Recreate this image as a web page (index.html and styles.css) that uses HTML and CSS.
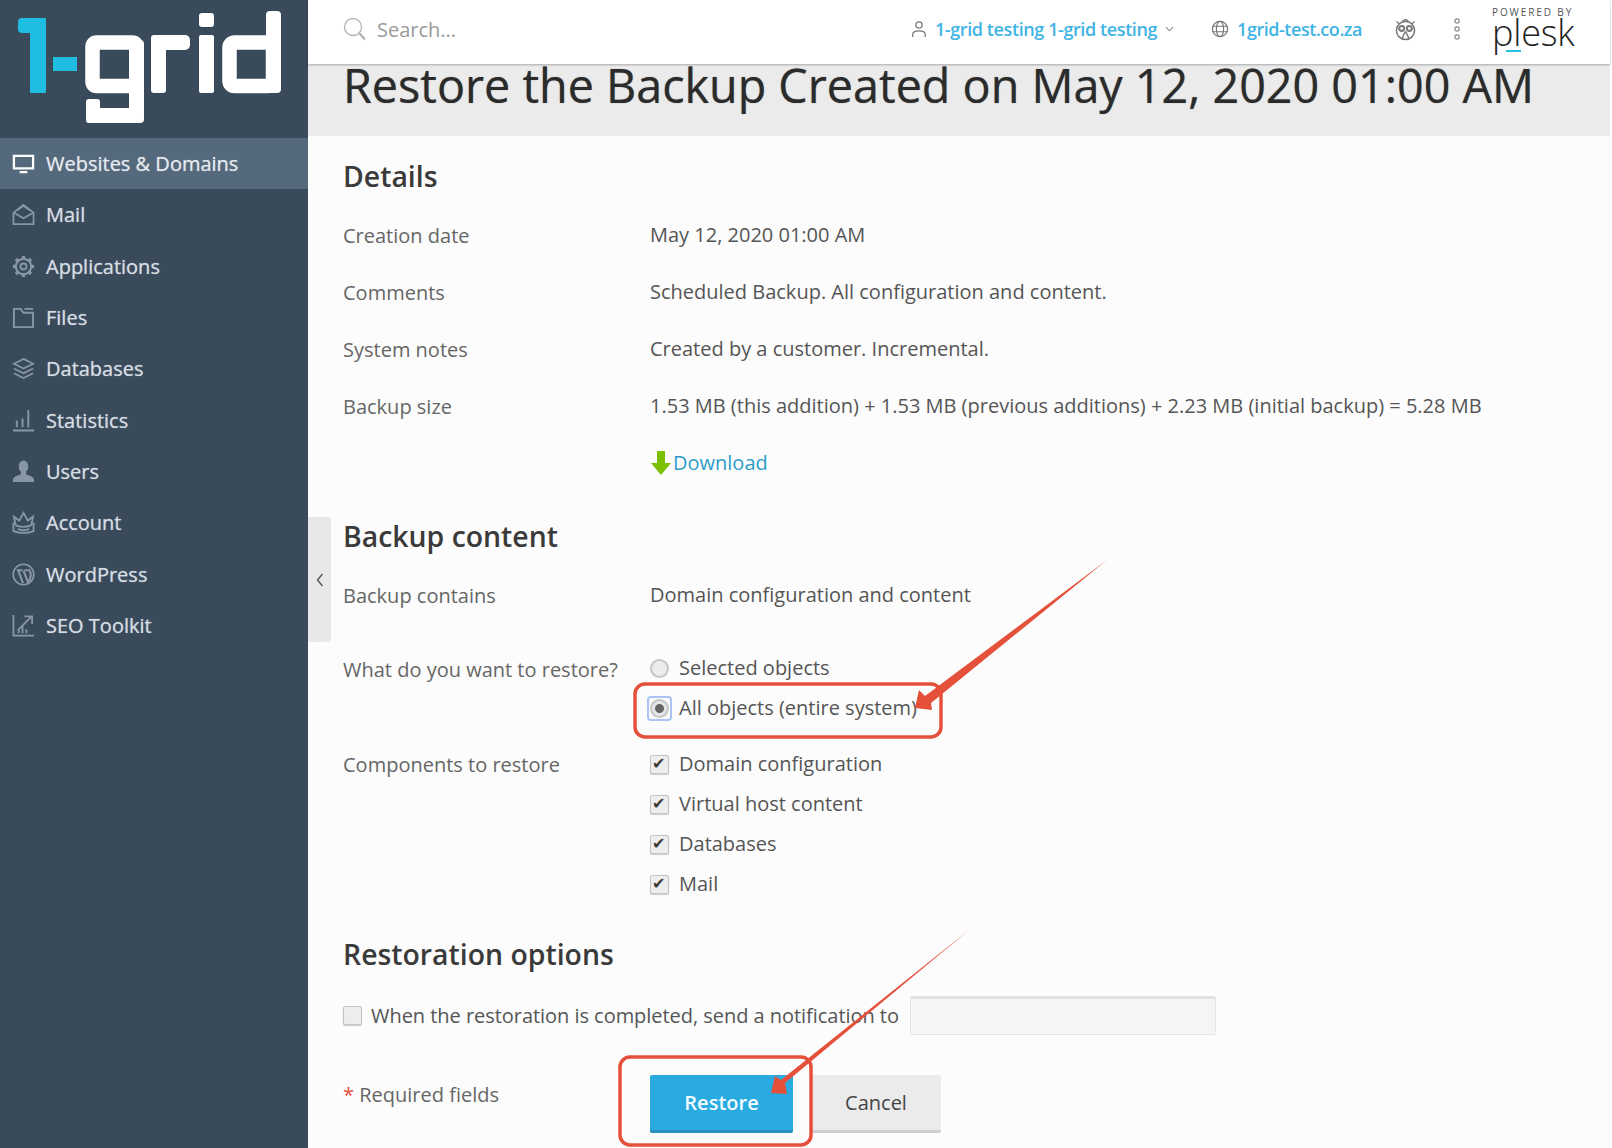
FILE: index.html
```html
<!DOCTYPE html>
<html lang="en">
<head>
<meta charset="utf-8">
<title>Restore the Backup</title>
<link rel="stylesheet" href="styles.css">
</head>
<body>
<div class="app">
  <aside class="sidebar">
    <div class="logo">
      <svg width="308" height="138" viewBox="0 0 308 138" role="img" aria-label="1-grid logo">
        <g fill="#1fbde0">
          <rect x="30" y="18" width="16" height="75" rx="1"/>
          <rect x="18" y="18" width="20" height="15" rx="4"/>
          <rect x="53" y="57" width="24" height="14"/>
        </g>
        <g fill="none" stroke="#fff" stroke-width="14.500">
          <rect x="92.500" y="42.500" width="44" height="43.500" rx="4"/>
          <rect x="229.500" y="42.500" width="43.500" height="43.500" rx="5"/>
        </g>
        <g fill="#fff">
          <rect x="129" y="40" width="15" height="83" rx="4"/>
          <rect x="86" y="99" width="14" height="24" rx="3"/>
          <rect x="86" y="108" width="58" height="15" rx="5"/>
          <rect x="151" y="35" width="15" height="58" rx="3"/>
          <rect x="151" y="35" width="39" height="15" rx="5"/>
          <rect x="199" y="35" width="15" height="58" rx="2"/>
          <rect x="199" y="13" width="15" height="14" rx="3"/>
          <rect x="266" y="11" width="15" height="82" rx="4"/>
        </g>
      </svg>
    </div>
    <nav class="menu">
      <a class="menu-item active"><svg class="ico" viewBox="0 0 24 24"><path d="M2 4h20v13H2zM8 21h8" fill="none" stroke="currentColor" stroke-width="2.400"/></svg><span>Websites &amp; Domains</span></a>
      <a class="menu-item"><svg class="ico" viewBox="0 0 24 24"><path d="M1.500 10 12 2l10.500 8v12h-21zM1.500 10 12 16l10.500-6M5 8l7-5 7 5" fill="none" stroke="currentColor" stroke-width="1.800"/></svg><span>Mail</span></a>
      <a class="menu-item"><svg class="ico" viewBox="0 0 24 24"><circle cx="12" cy="12" r="3.200" fill="none" stroke="currentColor" stroke-width="2"/><circle cx="12" cy="12" r="8" fill="none" stroke="currentColor" stroke-width="2.200"/><path d="M12 1v4M12 19v4M1 12h4M19 12h4M4.200 4.200 7 7M17 17l2.800 2.800M4.200 19.800 7 17M17 7l2.800-2.800" stroke="currentColor" stroke-width="3.500"/></svg><span>Applications</span></a>
      <a class="menu-item"><svg class="ico" viewBox="0 0 24 24"><path d="M2 3h7l3 4h10v15H2zM13 3h9" fill="none" stroke="currentColor" stroke-width="2"/></svg><span>Files</span></a>
      <a class="menu-item"><svg class="ico" viewBox="0 0 24 24"><path d="m12 2 10 5-10 5L2 7zM2 12l10 5 10-5M2 17l10 5 10-5" fill="none" stroke="currentColor" stroke-width="1.900"/></svg><span>Databases</span></a>
      <a class="menu-item"><svg class="ico" viewBox="0 0 24 24"><path d="M1 22.500h22M5 19v-7M11 19v-9M17 19V1" fill="none" stroke="currentColor" stroke-width="2"/></svg><span>Statistics</span></a>
      <a class="menu-item"><svg class="ico" viewBox="0 0 24 24"><ellipse cx="12" cy="7" rx="5" ry="6.500" fill="currentColor"/><path d="M9.500 12h5l.5 3.500c4 1 8 2 8 5.500v2H1v-2c0-3.500 4-4.500 8-5.500z" fill="currentColor"/></svg><span>Users</span></a>
      <a class="menu-item"><svg class="ico" viewBox="0 0 24 24"><path d="M4 15 2 6l5.500 4L12 2l4.500 8L22 6l-2 9M1.500 12v9c6 2.500 15 2.500 21 0v-9M4 15c5 2 11 2 16 0M6 19c4 1.500 8 1.500 12 0" fill="none" stroke="currentColor" stroke-width="1.900"/></svg><span>Account</span></a>
      <a class="menu-item"><svg class="ico" viewBox="0 0 24 24"><circle cx="12" cy="12" r="10.700" fill="none" stroke="currentColor" stroke-width="1.800"/><path d="M5 7.500h6M13 7.500h6M6.500 8l5 13M12 8l5 13M17 21l2.500-7c.5-2 0-3.500-1-6" fill="none" stroke="currentColor" stroke-width="2.200"/></svg><span>WordPress</span></a>
      <a class="menu-item"><svg class="ico" viewBox="0 0 24 24"><path d="M1.500 1v21.500H23M6 17 20 3M13 2.500h8v8M7 20v-3M11 20v-7M15 20v-4" fill="none" stroke="currentColor" stroke-width="1.900"/></svg><span>SEO Toolkit</span></a>
    </nav>
  </aside>

  <main class="main">
    <header class="topbar">
      <div class="search">
        <svg class="search-icon" viewBox="0 0 24 24"><circle cx="10" cy="10" r="8.500" fill="none" stroke="#b4b4b4" stroke-width="1.300"/><path d="m16.500 16.500 5.500 6" fill="none" stroke="#b4b4b4" stroke-width="2.400"/></svg>
        <span>Search...</span>
      </div>
      <div class="top-actions">
        <svg class="top-ico user-ico" viewBox="0 0 20 20"><circle cx="10" cy="5.500" r="3.500" fill="none" stroke="#777" stroke-width="1.400"/><path d="M3 19v-3c0-3 3-4 7-4s7 1 7 4v3" fill="none" stroke="#777" stroke-width="1.400"/></svg>
        <a class="top-link user-link">1-grid testing 1-grid testing</a>
        <svg class="chev" viewBox="0 0 10 6"><path d="m1 1 4 4 4-4" fill="none" stroke="#888" stroke-width="1.200"/></svg>
        <svg class="top-ico globe-ico" viewBox="0 0 20 20"><circle cx="10" cy="10" r="8.500" fill="none" stroke="#777" stroke-width="1.400"/><ellipse cx="10" cy="10" rx="4" ry="8.500" fill="none" stroke="#777" stroke-width="1.300"/><path d="M2 7h16M2 13h16" stroke="#777" stroke-width="1.200"/></svg>
        <a class="top-link domain-link">1grid-test.co.za</a>
        <svg class="owl" viewBox="0 0 22 24"><path d="M4 6 1.500 3.500M18 6l2.500-2.500M8 3l3-1.500L14 3" fill="none" stroke="#777" stroke-width="1.400"/><circle cx="11" cy="13" r="9.500" fill="none" stroke="#777" stroke-width="1.600"/><circle cx="7" cy="11" r="3.600" fill="#777"/><circle cx="15" cy="11" r="3.600" fill="#777"/><circle cx="7" cy="11" r="1.500" fill="#fff"/><circle cx="15" cy="11" r="1.500" fill="#fff"/><path d="m11 14-3.500 7M11 14l3.500 7" fill="none" stroke="#777" stroke-width="1.400"/></svg>
        <svg class="dots" viewBox="0 0 6 22"><circle cx="3" cy="3" r="2.100" fill="none" stroke="#888" stroke-width="1.200"/><circle cx="3" cy="11" r="2.100" fill="none" stroke="#888" stroke-width="1.200"/><circle cx="3" cy="19" r="2.100" fill="none" stroke="#888" stroke-width="1.200"/></svg>
        <div class="plesk">
          <span class="plesk-small">POWERED BY</span>
          <span class="plesk-name">plesk</span>
          <i class="plesk-dash"></i>
        </div>
      </div>
    </header>

    <div class="title-band"><h1>Restore the Backup Created on May 12, 2020 01:00 AM</h1></div>

    <div class="content">
      <button class="collapse" aria-label="Collapse"><svg viewBox="0 0 8 14"><path d="M6.500 1 1.500 7l5 6" fill="none" stroke="#555" stroke-width="1.400"/></svg></button>

      <section class="details">
        <h2>Details</h2>
        <div class="row"><div class="label">Creation date</div><div class="value">May 12, 2020 01:00 AM</div></div>
        <div class="row"><div class="label">Comments</div><div class="value">Scheduled Backup. All configuration and content.</div></div>
        <div class="row"><div class="label">System notes</div><div class="value">Created by a customer. Incremental.</div></div>
        <div class="row"><div class="label">Backup size</div><div class="value">1.53 MB (this addition) + 1.53 MB (previous additions) + 2.23 MB (initial backup) = 5.28 MB</div></div>
        <div class="row"><div class="label"></div><div class="value download"><svg class="dl-ico" viewBox="0 0 20 24"><path d="M6 0h8v12h6L10 24 0 12h6z" fill="#7ac000"/></svg><a>Download</a></div></div>
      </section>

      <section class="backup">
        <h2>Backup content</h2>
        <div class="row row-contains"><div class="label">Backup contains</div><div class="value">Domain configuration and content</div></div>
        <div class="row row-what">
          <div class="label">What do you want to restore?</div>
          <div class="value options">
            <div class="opt"><i class="radio"></i>Selected objects</div>
            <div class="opt"><i class="radio checked"></i>All objects (entire system)</div>
          </div>
        </div>
        <div class="row row-comp">
          <div class="label">Components to restore</div>
          <div class="value options">
            <div class="opt"><i class="check on"></i>Domain configuration</div>
            <div class="opt"><i class="check on"></i>Virtual host content</div>
            <div class="opt"><i class="check on"></i>Databases</div>
            <div class="opt"><i class="check on"></i>Mail</div>
          </div>
        </div>
      </section>

      <section class="options-sec">
        <h2>Restoration options</h2>
        <div class="notify"><i class="check"></i><span>When the restoration is completed, send a notification to</span><input class="email" type="text" aria-label="Email"></div>
      </section>

      <div class="actions">
        <div class="required"><span class="star">*</span> Required fields</div>
        <button class="btn primary">Restore</button>
        <button class="btn cancel">Cancel</button>
      </div>
    </div>
  </main>
</div>

<svg class="annot" viewBox="0 0 1612 1148" aria-hidden="true">
  <rect class="annot-box" x="635" y="684" width="306" height="53" rx="10"/>
  <rect class="annot-box" x="620" y="1057" width="191" height="88" rx="10"/>
  <polygon class="annot-arrow" points="1107,560 931,703 932,710 915,708 919,690 925,696"/>
  <polygon class="annot-arrow" points="969,930 785,1083 787,1094 771,1093 775,1076 781,1080"/>
</svg>
</body>
</html>
```

FILE: styles.css
```css
* { box-sizing: border-box; }
html, body { margin: 0; padding: 0; height: 1148px; overflow: hidden; background: #fff; }
body { position: relative; font-family: "Open Sans", "Liberation Sans", sans-serif; color: #555; }
.app { display: flex; width: 1610px; height: 1148px; }

.sidebar { width: 308px; flex: none; background: #394a5a; }
.logo { height: 138px; }
.logo svg { display: block; }
.menu { display: flex; flex-direction: column; }
.menu-item { display: flex; align-items: center; height: 51.3px; padding-left: 12px; color: #d6dde3; font-size: 20px; text-shadow: 0 0 1px rgba(214,221,227,.7); }
.menu-item .ico { width: 23px; height: 23px; margin-right: 11px; color: #8797a5; flex: none; }
.menu-item.active { background: #54697c; color: #e6ebef; }
.menu-item.active .ico { color: #fff; }

.main { flex: 1; display: flex; flex-direction: column; background: #fcfcfc; min-width: 0; }
.topbar { height: 64px; flex: none; display: flex; align-items: center; background: #fff; box-shadow: 0 1px 2px rgba(0,0,0,.28); position: relative; z-index: 2; padding: 0 0 6px 35px; }
.search { display: flex; align-items: center; color: #999; font-size: 20px; }
.search-icon { width: 24px; height: 24px; margin-right: 10px; }
.top-actions { margin-left: auto; display: flex; align-items: center; }
.top-ico { width: 18px; height: 18px; flex: none; }
.user-ico { margin-right: 7px; }
.top-link { color: #3fb4e5; font-size: 18px; font-weight: 600; letter-spacing: -0.4px; }
.domain-link { letter-spacing: -0.46px; }
.chev { width: 9px; height: 6px; margin: 0 6px 0 8px; }
.globe-ico { margin: 0 8px 0 31px; }
.owl { width: 21px; height: 23px; margin: 0 38px 0 33px; }
.dots { width: 6px; height: 22px; margin-right: 32px; }
.plesk { position: relative; width: 84px; height: 58px; margin-right: 34px; color: #222; }
.plesk-small { position: absolute; left: 0; top: 6px; font-size: 10px; line-height: 12px; letter-spacing: 1.9px; color: #555; white-space: nowrap; }
.plesk-name { position: absolute; left: 0; top: 18px; font-size: 36px; font-weight: 300; line-height: 30px; letter-spacing: -0.2px; }
.plesk-dash { position: absolute; left: 14px; top: 50px; width: 15px; height: 2px; background: #28bde2; }

.title-band { height: 72px; flex: none; background: #ebebeb; padding-left: 35px; }
h1 { margin: 0; font-size: 46.7px; font-weight: 400; line-height: 42px; color: #2b2b2b; white-space: nowrap; text-shadow: 0 0 1px rgba(43,43,43,.6); }
.content { flex: 1; position: relative; padding: 20px 0 0 35px; }
h2 { margin: 0; font-size: 28.4px; font-weight: 600; line-height: 40px; color: #3a3a3a; }
.collapse { position: absolute; left: 0; top: 381px; width: 23px; height: 125px; padding: 0; border: 0; border-radius: 0 4px 4px 0; background: #e8e8e8; display: flex; align-items: center; justify-content: center; }
.collapse svg { width: 8px; height: 14px; }

.row { display: grid; grid-template-columns: 307px 1fr; font-size: 20px; height: 57px; line-height: 34px; }
.label { color: #666; padding-top: 1px; }
.value { color: #555; }
.details { height: 360px; }
.details h2 { margin-bottom: 22px; }
.download { display: flex; align-items: center; height: 34px; color: #2d9dc8; }
.dl-ico { width: 20px; height: 24px; margin: 0 2px 0 1px; }
.backup h2 { margin-bottom: 22px; }
.row-contains { height: 74px; }
.row-what { height: 95px; }
.row-what .options { margin-top: -4px; }
.row-comp { height: auto; }
.row-comp .options { margin-top: -3px; }
.options { display: flex; flex-direction: column; }
.opt { display: flex; align-items: center; height: 40px; }
.opt i { margin-right: 10px; }
.radio { display: block; position: relative; width: 19px; height: 19px; border-radius: 50%; border: 2px solid #c6c6c6; background: #ececec; flex: none; }
.radio.checked { background: radial-gradient(circle, #666 0 4px, #e6e6e6 5px); }
.radio.checked::before { content: ""; position: absolute; inset: -5px; border: 2px solid #a9c4f5; border-radius: 4px; }
.check { display: block; width: 19px; height: 19px; border-radius: 2px; border: 1px solid #c4c4c4; background: #ededed; flex: none; position: relative; box-shadow: 0 1px 1px #ccc; }
.check.on::after { content: "\2714"; position: absolute; left: 1px; top: -8px; font: 16px "DejaVu Sans", sans-serif; line-height: 32px; color: #3d3d3d; }
.options-sec { margin-top: 30px; }
.options-sec h2 { margin-bottom: 21px; }
.notify { display: flex; align-items: center; height: 40px; font-size: 20px; color: #555; letter-spacing: -0.04px; }
.notify .check { margin-right: 9px; }
.email { width: 306px; height: 39px; margin-left: 11px; border: 1px solid #e4e4e4; border-top: 3px solid #e2e2e2; border-radius: 2px; background: #f5f5f5; }
.actions { display: flex; align-items: center; margin-top: 40px; height: 58px; font-size: 20px; }
.required { width: 307px; color: #666; margin-top: -20px; }
.star { color: #e24b3b; }
.btn { height: 58px; border: 0; font: 600 20px "Open Sans", sans-serif; border-radius: 2px; }
.primary { width: 143px; background: #29abe2; border-bottom: 3px solid #2591bf; color: #f3fbff; }
.cancel { width: 130px; margin-left: 18px; background: #ebebeb; border-bottom: 3px solid #cfcfcf; color: #444; font-weight: 500; }

.annot { position: absolute; left: 0; top: 0; width: 1612px; height: 1148px; pointer-events: none; z-index: 5; }
.annot-box { fill: none; stroke: #e5503a; stroke-width: 3.500; }
.annot-arrow { fill: #e5503a; }
```
